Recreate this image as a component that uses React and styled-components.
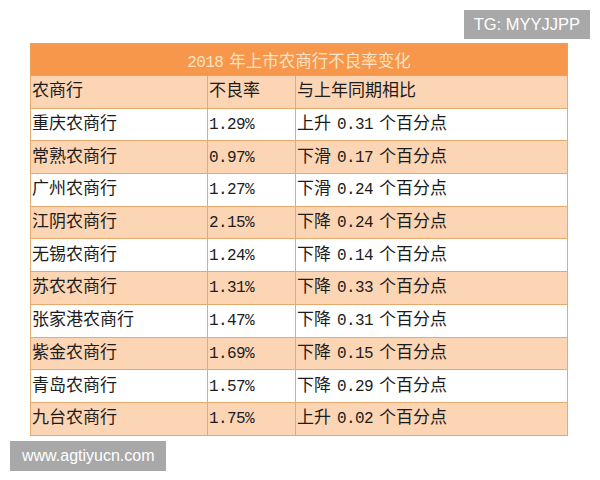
import React from "react";
import styled, { createGlobalStyle } from "styled-components";

const rows = [
  { name: "重庆农商行", rate: "1.29%", dir: "上升", delta: "0.31" },
  { name: "常熟农商行", rate: "0.97%", dir: "下滑", delta: "0.17" },
  { name: "广州农商行", rate: "1.27%", dir: "下滑", delta: "0.24" },
  { name: "江阴农商行", rate: "2.15%", dir: "下降", delta: "0.24" },
  { name: "无锡农商行", rate: "1.24%", dir: "下降", delta: "0.14" },
  { name: "苏农农商行", rate: "1.31%", dir: "下降", delta: "0.33" },
  { name: "张家港农商行", rate: "1.47%", dir: "下降", delta: "0.31" },
  { name: "紫金农商行", rate: "1.69%", dir: "下降", delta: "0.15" },
  { name: "青岛农商行", rate: "1.57%", dir: "下降", delta: "0.29" },
  { name: "九台农商行", rate: "1.75%", dir: "上升", delta: "0.02" },
];

function App() {
  return (
    <Page>
      <GlobalStyle />
      <TagRow>
        <Tag>TG: MYYJJPP</Tag>
      </TagRow>
      <Table>
        <colgroup>
          <col style={{ width: 177 }} />
          <col style={{ width: 88 }} />
          <col style={{ width: 272 }} />
        </colgroup>
        <tbody>
          <TitleRow>
            <TitleCell colSpan={3}>
              <Num $gap="0 6px 0 0">2018</Num>年上市农商行不良率变化
            </TitleCell>
          </TitleRow>
          <Row $shaded>
            <Cell>农商行</Cell>
            <Cell>不良率</Cell>
            <Cell>与上年同期相比</Cell>
          </Row>
          {rows.map((r, i) => (
            <Row key={r.name} $shaded={i % 2 === 1}>
              <Cell>{r.name}</Cell>
              <Cell>
                <Num>{r.rate}</Num>
              </Cell>
              <Cell>
                {r.dir}
                <Num $gap="0 6px">{r.delta}</Num>个百分点
              </Cell>
            </Row>
          ))}
        </tbody>
      </Table>
      <Watermark>www.agtiyucn.com</Watermark>
    </Page>
  );
}

export default App;

const GlobalStyle = createGlobalStyle`
  body {
    margin: 0;
    background: #ffffff;
  }
`;

const Page = styled.div`
  width: 600px;
  height: 480px;
  display: flex;
  flex-direction: column;
  padding-top: 10px;
  box-sizing: border-box;
  overflow: hidden;
`;

const TagRow = styled.div`
  display: flex;
  justify-content: flex-end;
  padding-right: 10px;
`;

const Tag = styled.div`
  height: 29px;
  padding: 0 10px;
  display: flex;
  align-items: center;
  background: #a8a8a8;
  color: #ffffff;
  font-family: "Liberation Sans", Arial, sans-serif;
  font-size: 16.5px;
`;

const Table = styled.table`
  margin: 4px 0 0 30px;
  width: 537px;
  table-layout: fixed;
  border-collapse: collapse;
  border: 1px solid #d9a06c;
  font-family: "Liberation Mono", "Noto Sans CJK SC", monospace;
  font-size: 17px;
  color: #1c1c1c;
`;

const TitleRow = styled.tr`
  height: 32px;
  background: #f6974b;
`;

const TitleCell = styled.td`
  padding: 0;
  text-align: center;
  color: #fde2c6;
  font-size: 16.5px;
  border: 1px solid #e8a260;
`;

const Row = styled.tr`
  height: 32.7px;
  background: ${(p) => (p.$shaded ? "#fcd5b5" : "#ffffff")};
`;

const Cell = styled.td`
  padding: 0 0 0 1px;
  white-space: nowrap;
  overflow: hidden;
  border: 1px solid #eaa96c;
  line-height: 1;
`;

const Num = styled.span`
  font-size: 16px;
  letter-spacing: -0.6px;
  margin: ${(p) => p.$gap || "0"};
`;

const Watermark = styled.div`
  align-self: flex-start;
  margin: 5px 0 0 10px;
  height: 30px;
  padding: 0 11px 0 12px;
  display: flex;
  align-items: center;
  background: #a8a8a8;
  color: #ffffff;
  font-family: "Liberation Sans", Arial, sans-serif;
  font-size: 16px;
`;
